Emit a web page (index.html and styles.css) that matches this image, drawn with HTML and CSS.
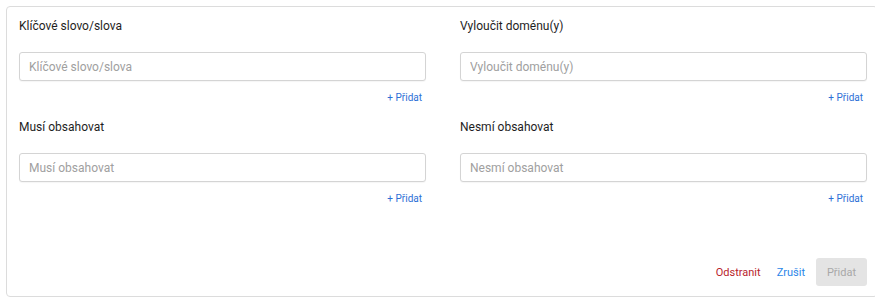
FILE: index.html
```html
<!DOCTYPE html>
<html lang="cs">
<head>
    <meta charset="UTF-8">
    <title>Filtr</title>
    <link rel="stylesheet" href="styles.css">
</head>
<body>
<div class="card">
    <div class="fields">
        <div class="field">
            <label class="field-label">Klíčové slovo/slova</label>
            <input class="field-input" type="text" placeholder="Klíčové slovo/slova">
            <div class="add-row"><a class="add-link" href="#">+ Přidat</a></div>
        </div>
        <div class="field">
            <label class="field-label">Vyloučit doménu(y)</label>
            <input class="field-input" type="text" placeholder="Vyloučit doménu(y)">
            <div class="add-row"><a class="add-link" href="#">+ Přidat</a></div>
        </div>
        <div class="field">
            <label class="field-label">Musí obsahovat</label>
            <input class="field-input" type="text" placeholder="Musí obsahovat">
            <div class="add-row"><a class="add-link" href="#">+ Přidat</a></div>
        </div>
        <div class="field">
            <label class="field-label">Nesmí obsahovat</label>
            <input class="field-input" type="text" placeholder="Nesmí obsahovat">
            <div class="add-row"><a class="add-link" href="#">+ Přidat</a></div>
        </div>
    </div>
    <div class="actions">
        <button class="btn-text btn-remove">Odstranit</button>
        <button class="btn-text btn-cancel">Zrušit</button>
        <button class="btn-submit" disabled>Přidat</button>
    </div>
</div>
</body>
</html>
```

FILE: styles.css
```css
body {
    font-family: Roboto, "Noto Sans", sans-serif;
    background-color: #fff;
    color: #1e1e1e;
    margin: 6px;
}
.card {
    width: 848px;
    border: 1px solid #dcdcdc;
    border-radius: 4px;
    padding: 10px 10px 10px 12px;
}
.fields {
    display: grid;
    grid-template-columns: 407px 407px;
    column-gap: 34px;
}
.field {
    display: flex;
    flex-direction: column;
    margin-bottom: 12px;
}
.field-label {
    font-size: 12px;
    line-height: 18px;
    margin-bottom: 17px;
}
.field-input {
    height: 29px;
    box-sizing: border-box;
    border: 1px solid #d4d4d4;
    border-radius: 3px;
    padding: 0 9px;
    font-family: inherit;
    font-size: 12px;
    color: #333;
    box-shadow: 0 1px 1px rgba(0,0,0,0.04);
}
.field-input::placeholder {
    color: #a0a0a0;
}
.add-row {
    display: flex;
    justify-content: flex-end;
    margin-top: 9px;
    padding-right: 4px;
}
.add-link {
    font-size: 10px;
    line-height: 16px;
    color: #2d6fd6;
    text-decoration: none;
}
.actions {
    display: flex;
    justify-content: flex-end;
    align-items: center;
    margin-top: 39px;
}
.btn-text {
    background: none;
    border: none;
    padding: 0;
    font-family: inherit;
    font-size: 11px;
    cursor: pointer;
}
.btn-remove {
    color: #b8222b;
    margin-right: 16px;
}
.btn-cancel {
    color: #2a86e8;
    margin-right: 11px;
}
.btn-submit {
    width: 51px;
    height: 28px;
    background-color: #e4e4e4;
    color: #a8a8a8;
    border: none;
    border-radius: 3px;
    font-family: inherit;
    font-size: 11px;
}
```
